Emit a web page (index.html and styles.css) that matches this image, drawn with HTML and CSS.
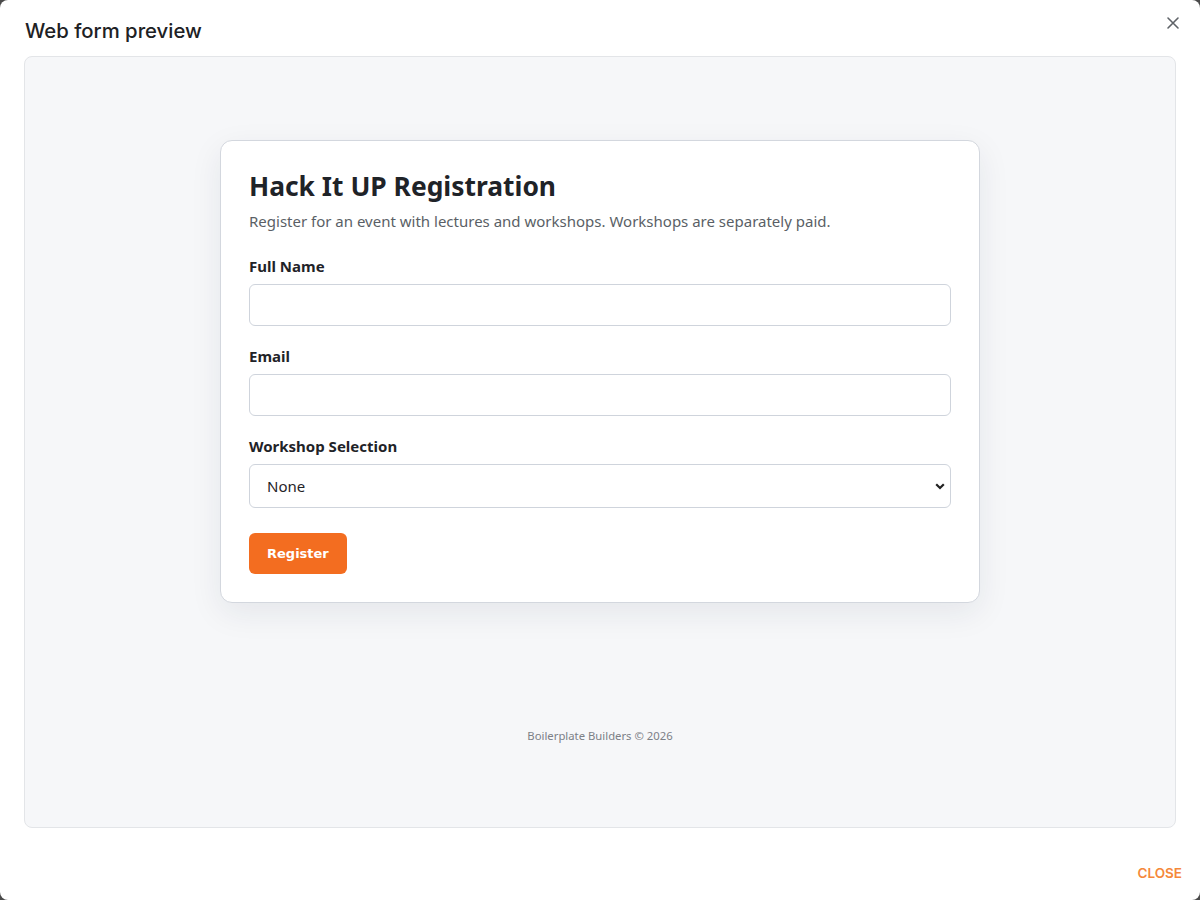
FILE: index.html
```html
<!DOCTYPE html>
<html lang="en">
<head>
<meta charset="utf-8">
<title>Web form preview</title>
<link rel="stylesheet" href="styles.css">
</head>
<body>
<div class="dialog">
  <div class="dialog-header">
    <h2 class="dialog-title">Web form preview</h2>
    <button class="icon-close" aria-label="Close">
      <svg width="14" height="14" viewBox="0 0 14 14"><path d="M2 2 L12 12 M12 2 L2 12" stroke="#5f6368" stroke-width="1.6" stroke-linecap="round"/></svg>
    </button>
  </div>
  <div class="preview">
    <div class="card">
      <h1 class="card-title">Hack It UP Registration</h1>
      <p class="card-desc">Register for an event with lectures and workshops. Workshops are separately paid.</p>
      <div class="field">
        <label class="label">Full Name</label>
        <input class="input" type="text">
      </div>
      <div class="field">
        <label class="label">Email</label>
        <input class="input" type="email">
      </div>
      <div class="field field-last">
        <label class="label">Workshop Selection</label>
        <div class="select">
          <span class="select-value">None</span>
          <svg class="chevron" width="10" height="7" viewBox="0 0 10 7"><path d="M1.2 1.2 L5 5 L8.8 1.2" fill="none" stroke="#222" stroke-width="2.2"/></svg>
        </div>
      </div>
      <button class="btn-register">Register</button>
    </div>
    <div class="preview-footer">Boilerplate Builders © 2026</div>
  </div>
  <div class="dialog-actions">
    <button class="btn-text">CLOSE</button>
  </div>
</div>
</body>
</html>
```
FILE: styles.css
```css
* { box-sizing: border-box; }
html, body { margin: 0; padding: 0; }
body {
  background: #4a4a4a;
  width: 1200px;
  height: 900px;
  overflow: hidden;
}
.dialog {
  width: 1200px;
  height: 900px;
  background: #fff;
  border-radius: 8px;
  display: flex;
  flex-direction: column;
}
.dialog-header {
  height: 56px;
  display: flex;
  align-items: flex-start;
  justify-content: space-between;
  padding: 0 20px 0 25px;
}
.dialog-title {
  margin: 0;
  padding-top: 19px;
  font-family: Inter, "Noto Sans", sans-serif;
  font-weight: 500;
  font-size: 20.3px;
  line-height: 24px;
  color: #202124;
}
.icon-close {
  margin-top: 16px;
  width: 14px;
  height: 14px;
  padding: 0;
  border: 0;
  background: none;
  display: flex;
}
.preview {
  margin: 0 24px;
  height: 772px;
  border: 1px solid #e3e5e8;
  border-radius: 8px;
  background: #f6f7f9;
  display: flex;
  flex-direction: column;
  align-items: center;
  padding-top: 83px;
}
.card {
  width: 760px;
  background: #fff;
  border: 1px solid #d3d7de;
  border-radius: 12px;
  padding: 28px;
  box-shadow: 0 10px 32px rgba(30, 40, 60, 0.08);
  font-family: "Noto Sans", "Open Sans", sans-serif;
}
.card-title {
  margin: 0 0 6px;
  font-size: 26.4px;
  line-height: 34px;
  font-weight: 700;
  color: #1f2328;
}
.card-desc {
  margin: 0 0 22px;
  font-size: 15px;
  line-height: 24px;
  color: #5a5f66;
}
.field {
  display: flex;
  flex-direction: column;
  gap: 7px;
  margin-bottom: 19px;
}
.field-last { margin-bottom: 25px; }
.label {
  font-size: 15px;
  line-height: 22px;
  font-weight: 700;
  color: #1f2328;
}
.input {
  height: 42px;
  border: 1px solid #cfd4dc;
  border-radius: 6px;
  background: #fff;
  font: inherit;
}
.select {
  height: 44px;
  border: 1px solid #cfd4dc;
  border-radius: 6px;
  background: #fff;
  display: flex;
  align-items: center;
  justify-content: space-between;
  padding: 0 5px 0 17px;
}
.select-value {
  font-size: 15px;
  color: #1f2328;
}
.btn-register {
  height: 41px;
  padding: 0 18px;
  border: 0;
  border-radius: 6px;
  background: #f36d20;
  color: #fff;
  font-family: "DejaVu Sans", Verdana, sans-serif;
  font-weight: 700;
  font-size: 13px;
}
.preview-footer {
  margin-top: 125px;
  font-family: "Noto Sans", "Open Sans", sans-serif;
  font-size: 11.3px;
  line-height: 16px;
  color: #7c8087;
}
.dialog-actions {
  flex: 1;
  display: flex;
  justify-content: flex-end;
  align-items: flex-start;
  padding: 35px 18px 0 0;
}
.btn-text {
  border: 0;
  background: none;
  padding: 0;
  font-family: Inter, "Noto Sans", sans-serif;
  font-weight: 600;
  font-size: 13.5px;
  line-height: 20px;
  color: #f5883a;
}
```
